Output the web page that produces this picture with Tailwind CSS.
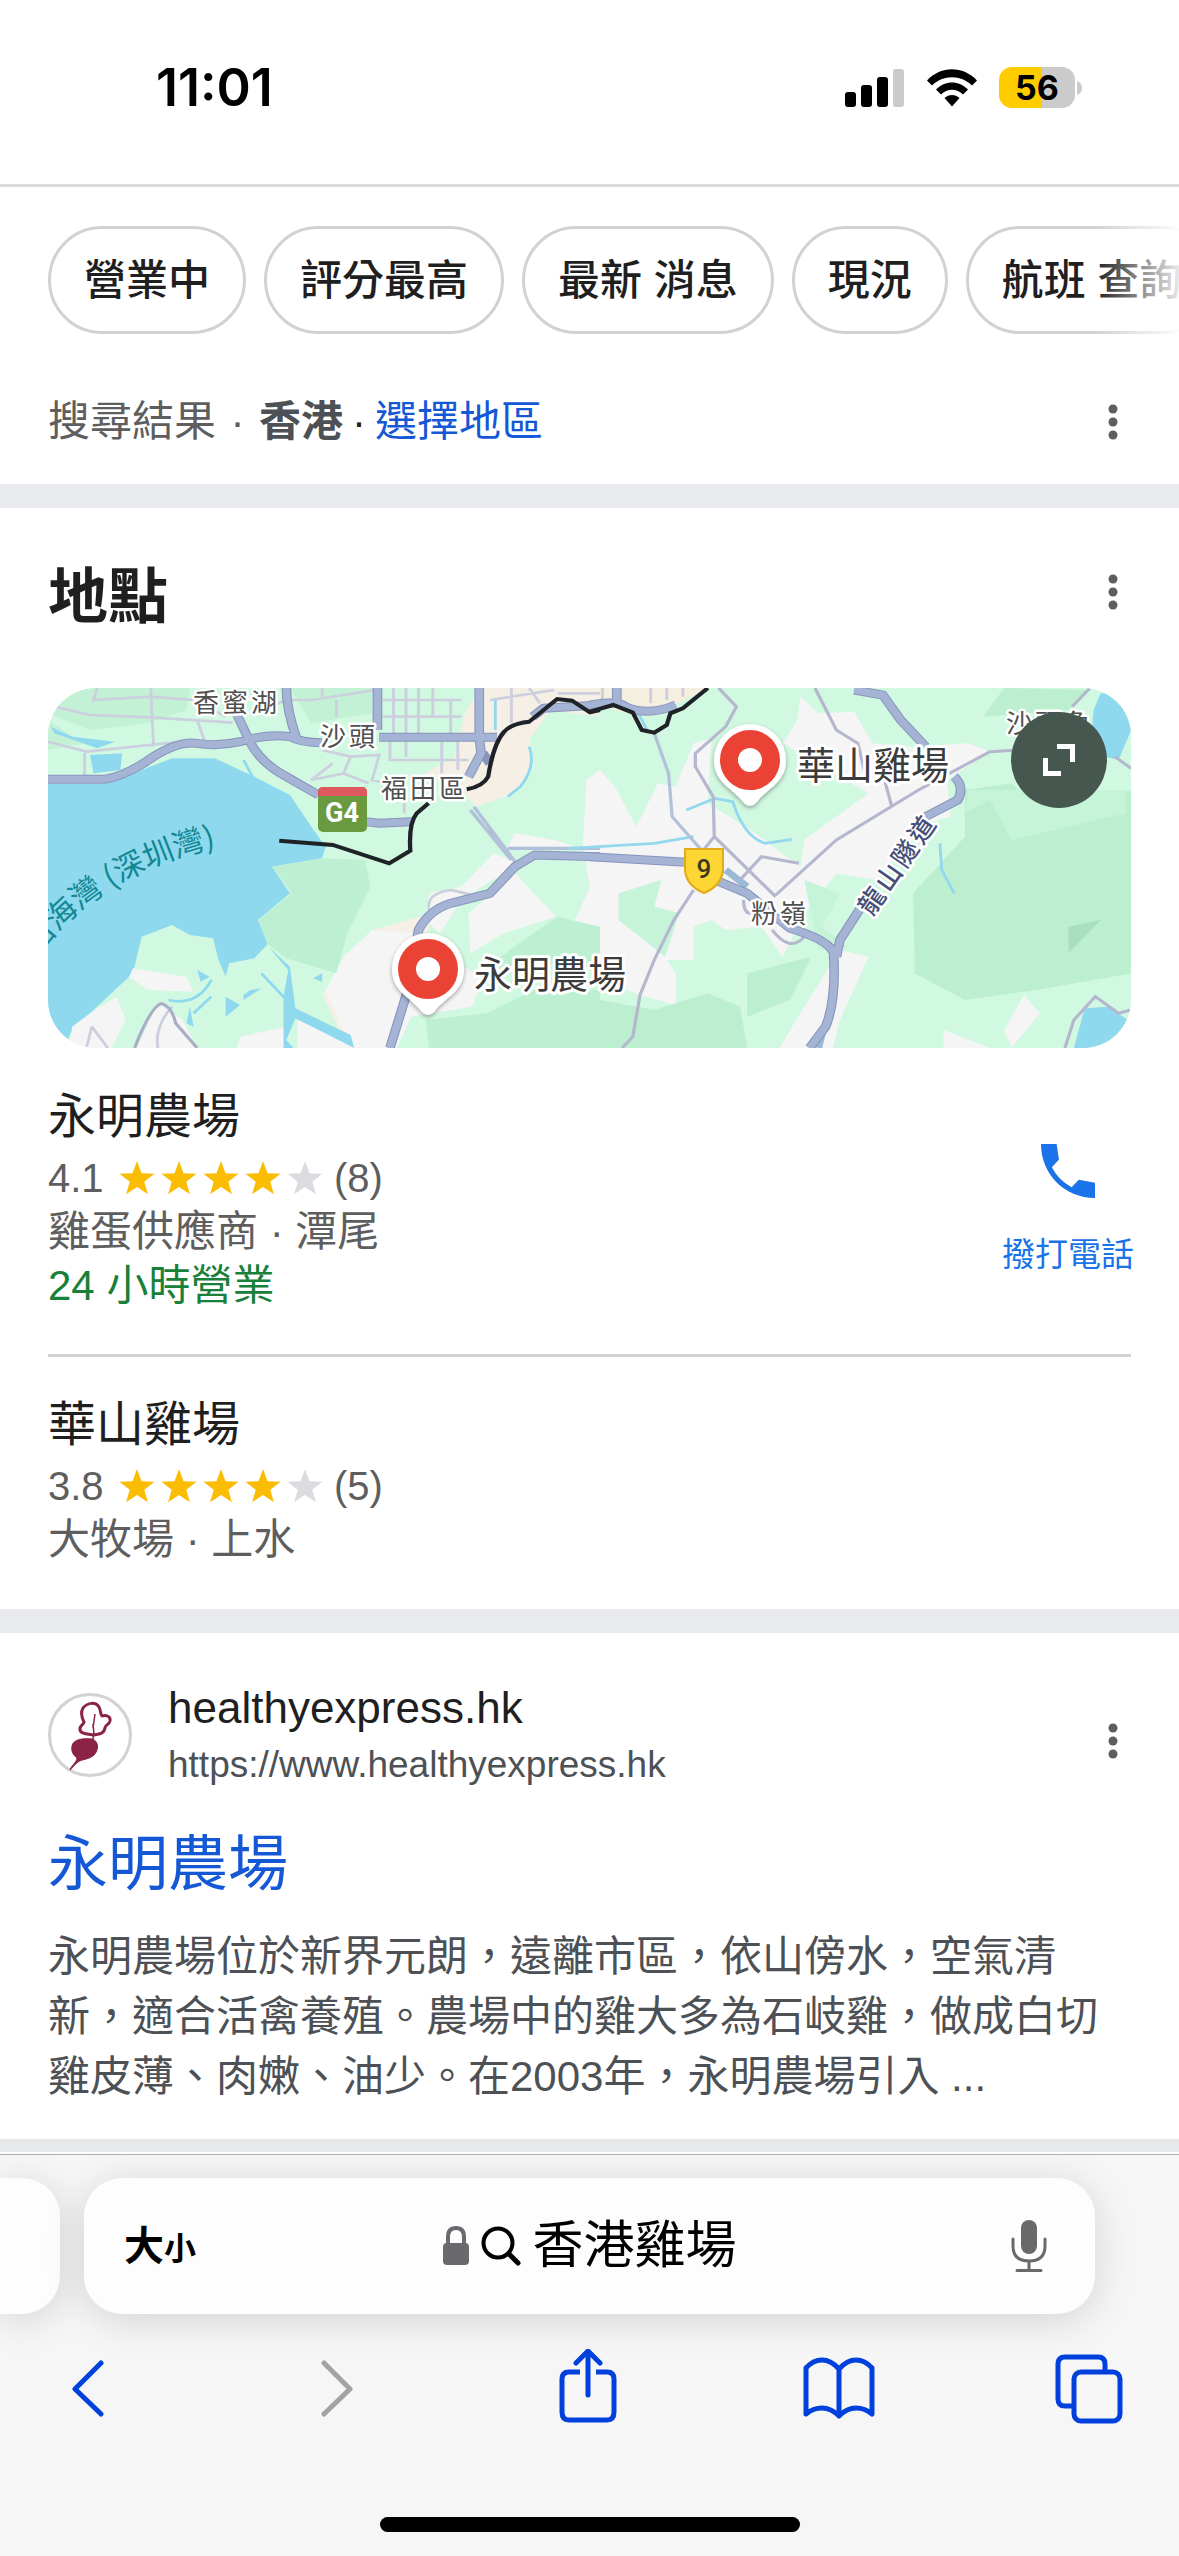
<!DOCTYPE html>
<html lang="zh-Hant">
<head>
<meta charset="utf-8">
<meta name="viewport" content="width=device-width, initial-scale=1">
<title>香港雞場</title>
<script src="https://cdn.jsdelivr.net/npm/@tailwindcss/browser@4"></script>
</head>
<body class="flex min-h-screen flex-col bg-white font-['Liberation_Sans','Noto_Sans_CJK_TC',sans-serif] text-[42px] text-[#1f1f1f]">

<!-- Status bar -->
<header class="flex h-[187px] items-start justify-between border-b-3 border-[#dadada] pt-[58px] pr-[97px] pl-[156px]">
  <time class="font-['Inter',sans-serif] text-[52px] leading-[60px] font-semibold text-black">11:01</time>
  <div class="flex items-center gap-[21px] pt-[9px]">
    <svg class="h-[38px] w-[60px]" viewBox="0 0 60 38" aria-label="訊號">
      <rect x="0" y="23" width="11" height="15" rx="3"/><rect x="16" y="16" width="11" height="22" rx="3"/><rect x="32" y="8" width="11" height="30" rx="3"/><rect x="48" y="0" width="11" height="38" rx="3" fill="#cbcbcb"/>
    </svg>
    <svg class="h-[38px] w-[52px]" viewBox="0 0 52 38" aria-label="Wi-Fi">
      <path d="M1 11.500C15-3.500 37-3.500 51 11.500L46 16.500C35 5.500 17 5.500 6 16.500Z"/>
      <path d="M10 20.500C19 11 33 11 42 20.500L37 25.500C31 19 21 19 15 25.500Z"/>
      <path d="M18.500 29C23 25 29 25 33.500 29L26 37.500Z"/>
    </svg>
    <div class="flex items-center gap-[2px]">
      <div class="flex h-[41px] w-[76px] items-center justify-center rounded-[13px] bg-linear-to-r from-[#ffcc00] from-56% to-[#cbcbcb] to-56% font-['Inter',sans-serif] text-[34px] leading-[41px] font-bold text-black">56</div>
      <svg class="h-[14px] w-[5px]" viewBox="0 0 5 14"><path d="M0 0Q5 2 5 7T0 14Z" fill="#cbcbcb"/></svg>
    </div>
  </div>
</header>

<main class="flex-1">
  <!-- Filters -->
  <nav class="relative flex gap-[18px] overflow-hidden pt-[39px] pl-12 font-medium whitespace-nowrap">
    <button class="h-[108px] shrink-0 rounded-full border-3 border-[#d2d2d2] px-[33px]">營業中</button>
    <button class="h-[108px] shrink-0 rounded-full border-3 border-[#d2d2d2] px-[33px]">評分最高</button>
    <button class="h-[108px] shrink-0 rounded-full border-3 border-[#d2d2d2] px-[33px]">最新 消息</button>
    <button class="h-[108px] shrink-0 rounded-full border-3 border-[#d2d2d2] px-[33px]">現況</button>
    <button class="h-[108px] shrink-0 rounded-full border-3 border-[#d2d2d2] px-[33px]">航班 查詢</button>
    <span class="absolute top-0 right-0 h-full w-[84px] bg-linear-to-r from-white/0 to-white/90"></span>
  </nav>

  <div class="flex h-[150px] items-center justify-between pt-[26px] pr-[54px] pl-12">
    <p class="flex items-center leading-[60px] text-[#5e5e5e]"><span>搜尋結果</span><span class="w-[43px] text-center">·</span><b class="font-bold text-[#4d5156]">香港</b><span class="w-8 text-center text-[#1f1f1f]">·</span><a href="#" class="text-[#1558d6]">選擇地區</a></p>
    <button aria-label="更多選項"><svg class="h-9 w-6" viewBox="0 0 24 36" fill="#5e5e5e"><circle cx="12" cy="5" r="4.500"/><circle cx="12" cy="18" r="4.500"/><circle cx="12" cy="31" r="4.500"/></svg></button>
  </div>

  <div class="h-6 bg-[#e8eaed]"></div>

  <!-- Places -->
  <section class="px-12">
    <div class="flex h-[180px] items-center justify-between pr-[6px]">
      <h2 class="text-[60px] leading-[84px] font-bold">地點</h2>
      <button aria-label="更多選項" class="pb-3"><svg class="h-9 w-6" viewBox="0 0 24 36" fill="#5e5e5e"><circle cx="12" cy="5" r="4.500"/><circle cx="12" cy="18" r="4.500"/><circle cx="12" cy="31" r="4.500"/></svg></button>
    </div>

    <div class="relative h-[360px] overflow-hidden rounded-[48px]">
      <svg class="h-full w-full font-['Noto_Sans_CJK_TC',sans-serif]" viewBox="0 0 1083 360" preserveAspectRatio="xMidYMid slice">
        <defs>
          <filter id="pin-shadow" x="-20%" y="-20%" width="140%" height="140%"><feDropShadow dx="0" dy="2" stdDeviation="2" flood-opacity=".35"/></filter>
        </defs>
        <rect width="1083" height="360" fill="#d1f8e1"/>
        <!-- Western half: bay, Futian -->
        <g transform="translate(-8 -8) scale(.3571 .3333)">
          <path d="M60 24H420L410 90 300 130 140 150 22 100ZM700 24H930V100L760 130ZM22 120L120 190 22 210Z" fill="#c3f1d5"/>
          <path d="M1230 24H1568V110L1430 90 1370 180Q1400 260 1330 340L1220 380 1160 300 1060 290 1160 230 1190 100ZM870 900L930 750 1100 700 990 1104H860L790 940Z" fill="#f5efe6"/>
          <path d="M1568 270L1530 300 1520 500 1540 620 1490 740 1568 790ZM1270 520L1340 550 1180 660 1120 760 1080 720 1090 640 1180 620ZM1330 580L1445 710 1300 760 1205 820 1200 700ZM930 750L1060 760 1240 900 1210 980 1040 1010 1000 1104H870L800 930 850 830ZM1330 460L1440 480 1500 500H1310Z" fill="#f5f5f5"/>
          <path d="M22 312L180 312 370 235 490 235 600 290 700 345 760 440 800 500 790 535 650 560 700 640 610 720 640 790 600 835 530 850 520 890 500 840 485 775 420 765 370 735 285 770 260 880 140 1000 85 1060 70 1104H22ZM140 225L230 220 225 270 150 280ZM30 140L90 170 210 185 160 205 40 160Z" fill="#8fd9ef"/>
          <path d="M790 535L910 540 925 620 860 760 830 880 690 835 635 790 612 720 704 640 680 600 650 560Z" fill="#bdf0d2"/>
          <path d="M1080 1020L1250 1000 1400 920 1568 930V1104H1090ZM1340 790L1450 710 1568 740V860L1400 850 1240 870Z" fill="#bdf0d2"/>
          <path d="M260 865L410 890 430 935 300 930 250 890ZM140 1000L215 950 240 1020 200 1104H80L90 1040ZM330 970L400 1020 440 1104H270ZM560 1070L690 1040V1104H550ZM720 1020L860 1070 870 1104H720Z" fill="#f5f5f5"/>
          <path d="M640 800L700 860 715 985 870 1065 880 1104 715 1015 690 1080 710 1104H682V950L695 870ZM440 870L475 890 450 905ZM520 950L560 975 520 1010ZM570 945L590 930 620 925 570 960ZM420 980L430 1040 410 1030ZM765 895L790 880 790 905Z" fill="#8fd9ef"/>
          <g fill="none" stroke="#cccfdd" stroke-width="8">
            <path d="M22 75L140 105 310 112 540 128M160 24L150 60 310 50 430 60 520 110M310 24L318 200M22 185L130 215 440 180M125 215V310M440 120L460 180M620 90L690 60 760 60 940 30M790 24V60M830 60V110M990 24V170M1025 24V230M1060 24V170M1100 24V110M1150 60V170M960 60H1180M960 110H1180M980 170V240H1200M1125 180V280M1170 180V270M790 210L870 230 950 225 930 300 1020 320M820 250L760 300 850 280 920 310M870 230L850 280M1320 24V130M1370 24L1400 70M1260 60L1440 30M1450 40H1568M1020 320V400"/>
            <path d="M145 1040L190 1104M145 1040L130 1104M370 980Q320 1040 330 1104M1090 690Q1080 640 1150 630L1230 650"/>
          </g>
          <path d="M1370 200Q1390 260 1345 320L1310 350M570 240L600 300M1275 60V150M360 960Q440 980 480 900M430 1000L480 950M620 880L690 960" fill="none" stroke="#8fd9ef" stroke-width="8"/>
          <path d="M1215 380L1330 545M1205 390L1320 540M1310 505H1568" fill="none" stroke="#b3c0da" stroke-width="10"/>
          <g fill="none" stroke-linejoin="round">
            <path d="M22 298H180Q230 290 290 250 380 180 440 190 500 200 560 185 640 160 700 170 730 188 790 188M552 105L590 190Q620 250 690 290L780 345M690 24Q690 90 720 180M945 24V150M950 172H1280M1230 24V170L1235 220 1200 290M1240 220L1260 250M910 425L950 430 1040 425M980 1104L1030 930 1060 750Q1090 690 1150 670L1260 640 1330 560 1385 525 1568 530M1380 110L1410 85 1568 75" stroke="#8795bd" stroke-width="27"/>
            <path d="M22 298H180Q230 290 290 250 380 180 440 190 500 200 560 185 640 160 700 170 730 188 790 188M552 105L590 190Q620 250 690 290L780 345M1230 24V170L1235 220 1200 290M910 425L950 430 1040 425M980 1104L1030 930 1060 750Q1090 690 1150 670L1260 640 1330 560 1385 525 1568 530M950 172H1280M690 24Q690 90 720 180M945 24V150M1380 110L1410 85 1568 75" stroke="#a5b3d5" stroke-width="21"/>
            <path d="M265 1104Q310 980 340 970 370 980 380 1030L440 1104" stroke="#a9adc6" stroke-width="9"/>
          </g>
          <path d="M670 482L820 495 978 550 1037 512Q1032 430 1055 400L1088 370M1195 328Q1240 320 1255 290 1270 190 1300 155 1320 130 1370 125L1448 57 1490 62 1540 97 1568 90" fill="none" stroke="#1f2226" stroke-width="12"/>
        </g>
        <!-- Eastern half: Fanling, tunnel, hills -->
        <g transform="translate(542 -8) scale(.3571 .3333)">
          <path d="M28 24H330L210 90 150 110 28 80Z" fill="#f5efe0"/>
          <path d="M590 50L640 100 740 95 790 190 900 200 1060 190 1120 215 1000 300 1010 410 940 430 800 600 690 580 600 700 540 830 480 740 380 750 340 720 290 740 290 840 215 840 240 880 240 975 140 945 28 900V270L70 320 130 440 190 310 240 320 290 190 340 175 330 370 450 450 590 560 600 480 780 340 540 190 580 120ZM700 810L780 830 700 1020 680 1104H530L600 980ZM1215 945L1260 1000 1180 1104 1160 1050ZM990 1050L1120 1104H990Z" fill="#f5f5f5"/>
          <path d="M80 640L200 600 180 680 250 700 210 830 80 720Z" fill="#c5f4d8"/>
          <path d="M1050 330L1180 310 1240 370 1520 330V880L1250 930 1050 960 910 880 905 640 1050 470ZM28 960L180 990 330 940 420 980 440 1104H28ZM440 880L620 830 560 960 440 1010ZM1160 24L1400 30 1340 90 1100 110Z" fill="#bbefcf"/>
          <path d="M1340 740L1430 720 1340 820Z" fill="#a9dfbd"/>
          <path d="M1050 400L1120 360 1180 480 1500 400V330H1060ZM600 600L700 640 650 740 720 800 640 810Z" fill="#c5f4d8"/>
          <path d="M1430 40L1520 40V140L1480 240 1400 220 1410 90ZM1385 985L1450 980 1520 1030V1104H1355Z" fill="#8fd9ef"/>
          <path d="M270 390L350 355 400 365Q430 470 490 490L565 478M980 490L985 570 1020 640M130 90L160 150M-60 505L180 490 290 470" fill="none" stroke="#93d8ee" stroke-width="8"/>
          <path d="M28 60H80M35 24V70M170 70V24M215 60V24M260 50V24" fill="none" stroke="#cccfdd" stroke-width="8"/>
          <g fill="none" stroke="#b4b7ce" stroke-width="9">
            <path d="M360 24L410 80 380 140 295 220 295 260 345 350 348 470 520 650M348 470L310 520M630 24L690 150 750 190 770 280M810 240L845 380M520 645L690 480 920 330 1120 215 1200 210M1350 80L1400 24M1470 230L1515 265M290 630L235 720 180 840 140 945 120 1070 90 1104M420 600L480 530 585 550M430 660Q430 700 450 700M510 750Q560 820 600 770M1330 1104L1355 1020 1415 950 1480 1000 1515 990"/>
            <path d="M180 160L220 280 230 410 320 520" stroke="#b3c0da"/>
          </g>
          <path d="M655 1040L640 1104M380 570L440 620" fill="none" stroke="#9bb8d5" stroke-width="20"/>
          <path d="M0 75Q80 60 100 80 160 110 240 75M75 24V70M0 530L270 547M350 600L440 640 560 745Q670 780 682 820 690 960 660 1040L615 1104M690 830L700 780 760 680M940 410L1030 360Q1050 320 1020 290M740 30L820 45 870 120 940 200" fill="none" stroke="#8795bd" stroke-width="27"/>
          <path d="M0 75Q80 60 100 80 160 110 240 75M75 24V70M0 530L270 547M350 600L440 640 560 745Q670 780 682 820 690 960 660 1040L615 1104M690 830L700 780 760 680M940 410L1030 360Q1050 320 1020 290M740 30L820 45 870 120 940 200" fill="none" stroke="#a5b3d5" stroke-width="21"/>
          <path d="M0 95L65 75 120 98 145 150 180 158 215 135 225 100 260 85 330 24" fill="none" stroke="#1f2226" stroke-width="12"/>
        </g>
        <!-- Road shields -->
        <rect x="270" y="99" width="49" height="45" rx="5" fill="#699a3f"/>
        <path d="M270 108V104Q270 99 275 99H314Q319 99 319 104V108Z" fill="#df5a5e"/>
        <text x="294" y="134" text-anchor="middle" font-family="Roboto, sans-serif" font-size="27" font-weight="700" fill="#fff">G4</text>
        <path d="M637 161H675V183Q673 198 656 205 639 198 637 183Z" fill="#fdd633" stroke="#e2ab1e" stroke-width="2"/>
        <text x="656" y="190" text-anchor="middle" font-family="Roboto, sans-serif" font-size="26" font-weight="500" fill="#3a3a20">9</text>
        <!-- District names -->
        <g font-size="26" fill="#505050" stroke="#fff" stroke-width="5" stroke-linejoin="round" paint-order="stroke" letter-spacing="3">
          <text x="145" y="24">香蜜湖</text>
          <text x="272" y="58">沙頭</text>
          <text x="333" y="110">福田區</text>
          <text x="703" y="235">粉嶺</text>
          <text x="958" y="45">沙頭角</text>
          <text x="0" y="0" transform="translate(824 229) rotate(-55)" fill="#454f78" font-weight="500">龍山隧道</text>
        </g>
        <path id="bay-curve" d="M-10 268Q54 178 200 152" fill="none"/>
        <text font-size="31" fill="#128893"><textPath href="#bay-curve">后海灣 (深圳灣)</textPath></text>
        <!-- Place pins -->
        <g id="pin">
          <path filter="url(#pin-shadow)" d="M380 245A36 36 0 0 1 416 281C416 304 397 309 386 324Q380 330 374 324C363 309 344 304 344 281A36 36 0 0 1 380 245Z" fill="#fff"/>
          <circle cx="380" cy="281" r="21" fill="none" stroke="#ea4335" stroke-width="18"/>
        </g>
        <use href="#pin" x="322" y="-209"/>
        <g font-size="38" fill="#3c3c3c" stroke="#fff" stroke-width="6" stroke-linejoin="round" paint-order="stroke">
          <text x="426" y="300">永明農場</text>
          <text x="749" y="91">華山雞場</text>
        </g>
      </svg>
      <button aria-label="展開地圖" class="absolute top-6 right-6 flex size-24 items-center justify-center rounded-full bg-[#46574f]">
        <svg class="size-9" viewBox="0 0 36 36" fill="none" stroke="#fff" stroke-width="5"><path d="M16 4.500H31.500V20M4.500 16V31.500H20"/></svg>
      </button>
    </div>

    <article class="flex items-start justify-between border-b-3 border-[#d2d2d2] pt-[34px] pb-[41px]">
      <div>
        <h3 class="text-[48px] leading-[69px]">永明農場</h3>
        <p class="flex h-[54px] items-center text-[40px] text-[#5e5e5e]"><span class="w-[68px]">4.1</span>
          <svg class="h-[36px] w-[210px]" viewBox="0 0 210 36" fill="#fbbc04" aria-label="4 星"><path id="star" d="M21 1L25.500 13.200 38.500 13.700 28.300 21.700 31.900 34.200 21 27 10.100 34.200 13.700 21.700 3.500 13.700 16.500 13.200Z"/><use href="#star" x="42"/><use href="#star" x="84"/><use href="#star" x="126"/><path d="M189 1L193.500 13.200 206.500 13.700 196.300 21.700 199.900 34.200 189 27 178.100 34.200 181.700 21.700 171.500 13.700 184.500 13.200Z" fill="#dadce0"/></svg>
          <span class="pl-2">(8)</span></p>
        <p class="leading-[54px] text-[#5e5e5e]">雞蛋供應商 · 潭尾</p>
        <p class="leading-[54px] text-[#188038]">24 小時營業</p>
      </div>
      <a href="#" class="-mr-[3px] flex flex-col items-center pt-[53px] text-[#1a73e8]">
        <svg class="size-[72px]" viewBox="0 0 24 24" fill="#1a73e8"><path d="M3 3H8.200L9 8.200 6.620 10.790C8.060 13.620 10.380 15.930 13.210 17.380L15.600 14.900 21 15.900V21C10.800 21 3 13 3 3Z"/></svg>
        <span class="pt-6 text-[33px] leading-[48px]">撥打電話</span>
      </a>
    </article>

    <article class="pt-[33px] pb-[42px]">
      <h3 class="text-[48px] leading-[69px]">華山雞場</h3>
      <p class="flex h-[54px] items-center text-[40px] text-[#5e5e5e]"><span class="w-[68px]">3.8</span>
        <svg class="h-[36px] w-[210px]" viewBox="0 0 210 36" fill="#fbbc04" aria-label="4 星"><use href="#star"/><use href="#star" x="42"/><use href="#star" x="84"/><use href="#star" x="126"/><path d="M189 1L193.500 13.200 206.500 13.700 196.300 21.700 199.900 34.200 189 27 178.100 34.200 181.700 21.700 171.500 13.700 184.500 13.200Z" fill="#dadce0"/></svg>
        <span class="pl-2">(5)</span></p>
      <p class="leading-[54px] text-[#5e5e5e]">大牧場 · 上水</p>
    </article>
  </section>

  <div class="h-6 bg-[#e8eaed]"></div>

  <!-- Web result -->
  <article class="px-12 pt-[45px] pb-[32px]">
    <div class="flex items-center justify-between pr-[6px]">
      <div class="flex items-center gap-9">
        <span class="flex size-[84px] shrink-0 items-center justify-center rounded-full border-3 border-[#d2d2d2]">
          <svg class="size-[78px]" viewBox="0 0 78 78" fill="none" stroke="#8b2346" stroke-width="3" stroke-linejoin="round"><path d="M42 39C36 38 28 38 29 32 30 29 33 28 33 26 31 22 29 17 32 12 37 6 45 6 48 11 50 14 49 18 51 20 55 19 60 20 59 25 58 29 54 29 54 32 53 38 48 38 42 39Z"/><path d="M42 32L44 18M42 28C42 32 44 34 42 43" stroke-width="1.500"/><path d="M21 50C22 43 33 42 41 43 48 45 48 54 43 59 38 64 29 63 26 67 22 70 20 74 19 74 19 71 26 66 26 62 22 59 20 55 21 50Z" fill="#8b2346" stroke-width="1"/></svg>
        </span>
        <div>
          <p class="text-[44px] leading-[60px]">healthyexpress.hk</p>
          <p class="text-[37px] leading-[54px] text-[#4d5156]">https://www.healthyexpress.hk</p>
        </div>
      </div>
      <button aria-label="更多選項" class="pt-3"><svg class="h-9 w-6" viewBox="0 0 24 36" fill="#5e5e5e"><circle cx="12" cy="5" r="4.500"/><circle cx="12" cy="18" r="4.500"/><circle cx="12" cy="31" r="4.500"/></svg></button>
    </div>
    <h3 class="pt-[31px] text-[60px] leading-[84px] text-[#1558d6]"><a href="#">永明農場</a></h3>
    <p class="pt-[20px] leading-[60px] text-[#4d5156]">永明農場位於新界元朗，遠離市區，依山傍水，空氣清新，適合活禽養殖。農場中的雞大多為石岐雞，做成白切雞皮薄、肉嫩、油少。在2003年，永明農場引入 ...</p>
  </article>
  <div class="h-[13px] bg-[#e6e8ea]"></div>
</main>

<!-- Browser controls -->
<footer class="overflow-hidden border-t border-[#aaacae] bg-[#f6f6f7] pb-6">
  <div class="flex gap-6 pt-[23px]">
    <div class="h-[136px] w-[60px] shrink-0 rounded-r-[38px] bg-[#fdfdfd] shadow-[0_6px_40px_rgba(0,0,0,0.14)]"></div>
    <div class="mr-[84px] flex h-[136px] flex-1 items-center justify-between rounded-[38px] bg-[#fdfdfd] px-10 text-black shadow-[0_6px_40px_rgba(0,0,0,0.14)]">
      <button class="flex w-[90px] items-baseline font-bold"><span class="text-[40px]">大</span><span class="text-[32px]">小</span></button>
      <div class="flex items-center gap-[11px]">
        <svg class="h-10 w-7" viewBox="0 0 28 40"><path d="M6 19V11Q6 2 14 2T22 11V19" fill="none" stroke="#69696e" stroke-width="4"/><rect x="1" y="17" width="26" height="22" rx="4" fill="#69696e"/></svg>
        <svg class="h-10 w-10" viewBox="0 0 40 40" fill="none" stroke="#000" stroke-width="4" stroke-linecap="round"><circle cx="17" cy="17" r="14.500"/><path d="M28 28L37 37" stroke-width="5"/></svg>
        <span class="text-[51px] leading-[72px]">香港雞場</span>
      </div>
      <button aria-label="語音輸入" class="flex w-[90px] justify-end pr-2"><svg class="h-[54px] w-9" viewBox="0 0 36 54" fill="none" stroke="#69696b" stroke-width="3" stroke-linecap="round"><rect x="10" y="1" width="16" height="34" rx="8" fill="#69696b" stroke="none"/><path d="M2 20V27Q2 42 18 42T34 27V20M18 42V51M6 51.500H30"/></svg></button>
    </div>
  </div>
  <nav class="flex items-center justify-between pt-[35px] pr-[54px] pl-[51px]">
    <button aria-label="返回" class="flex w-[72px] justify-center"><svg class="h-[76px] w-[33px]" viewBox="0 0 33 76" fill="none" stroke="#0040dd" stroke-width="5" stroke-linecap="round" stroke-linejoin="round"><path d="M30 14L4 40 30 65"/></svg></button>
    <button aria-label="前進" class="flex w-[72px] justify-center"><svg class="h-[76px] w-[33px]" viewBox="0 0 33 76" fill="none" stroke="#a3a3a5" stroke-width="5" stroke-linecap="round" stroke-linejoin="round"><path d="M3 14L29 40 3 65"/></svg></button>
    <button aria-label="分享" class="flex w-[72px] justify-center"><svg class="h-[76px] w-[58px]" viewBox="0 0 58 76" fill="none" stroke="#0040dd" stroke-width="5" stroke-linecap="round" stroke-linejoin="round"><path d="M29 46V3M17 14L29 2 41 14"/><path d="M21 23H10Q3 23 3 30V63Q3 71 10 71H48Q55 71 55 63V30Q55 23 48 23H37" stroke-linecap="butt"/></svg></button>
    <button aria-label="書籤" class="flex w-[72px] justify-center"><svg class="h-[76px] w-[72px]" viewBox="0 0 72 76" fill="none" stroke="#0040dd" stroke-width="5" stroke-linecap="round" stroke-linejoin="round"><path d="M36 20Q28 11 19 11T3 19V65Q10 59 19 59T36 67Q44 59 53 59T69 65V19Q62 11 53 11T36 20V66"/></svg></button>
    <button aria-label="分頁" class="flex w-[72px] justify-center"><svg class="h-[76px] w-[68px]" viewBox="0 0 68 76" fill="none" stroke="#0040dd" stroke-width="5"><rect x="19" y="23" width="46" height="49" rx="7"/><path d="M50 22V15Q50 8 43 8H10Q3 8 3 15V50Q3 57 10 57H17"/></svg></button>
  </nav>
  <div class="mx-auto mt-[92px] h-[15px] w-[420px] rounded-full bg-black"></div>
</footer>
</body>
</html>
